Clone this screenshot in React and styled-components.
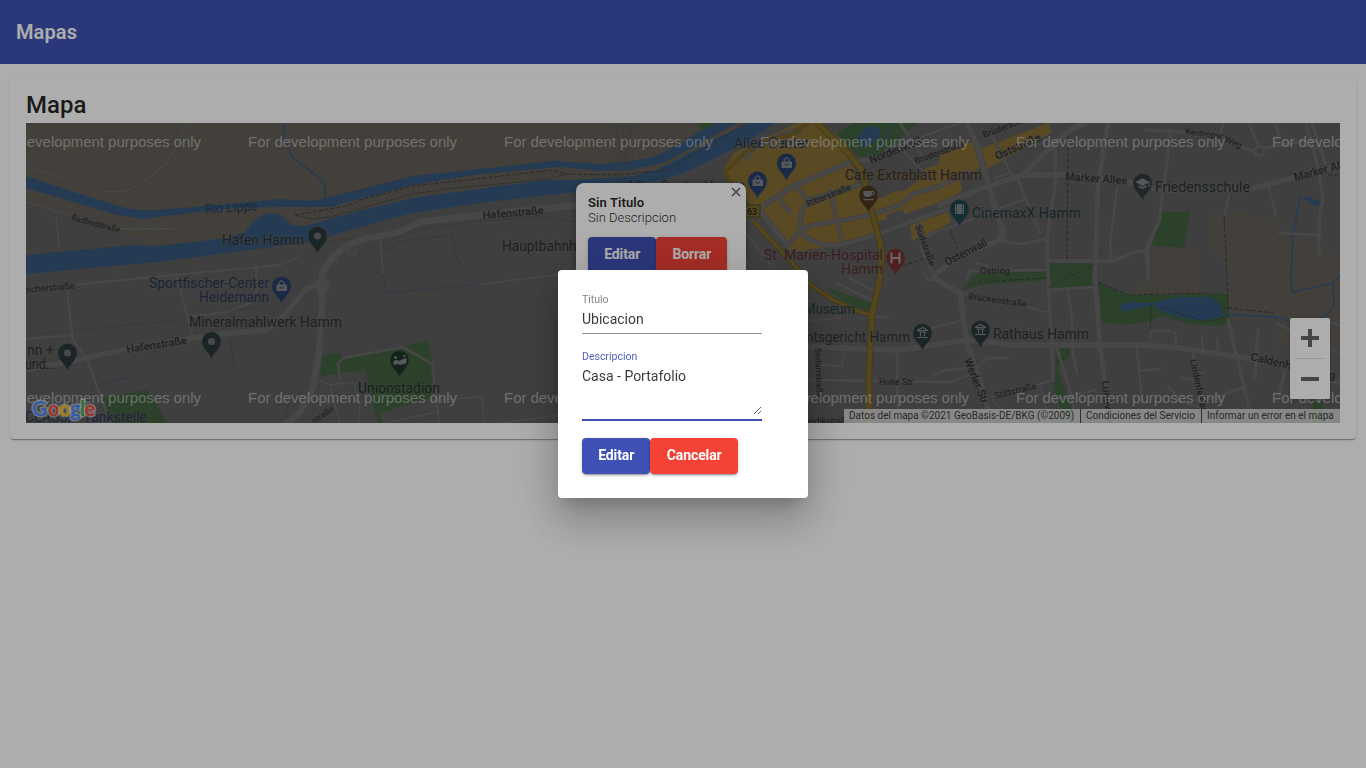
import React from "react";
import styled, { createGlobalStyle, css } from "styled-components";

const GlobalStyle = createGlobalStyle`
  *, *::before, *::after { box-sizing: border-box; }
  html, body { margin: 0; height: 100%; background: #fff; overflow: hidden; }
  body { font-family: Roboto, "Liberation Sans", sans-serif; color: rgba(0, 0, 0, 0.87); }
`;

const Toolbar = styled.header`
  display: flex;
  align-items: center;
  height: 64px;
  padding: 0 16px;
  background: #3f51b5;
  color: #fff;
`;

const ToolbarTitle = styled.h1`
  margin: 0;
  font-size: 20px;
  font-weight: 600;
  line-height: 32px;
  letter-spacing: 0.1px;
`;

const Card = styled.main`
  margin: 15px 10px 0;
  padding: 10px 16px 16px;
  border-radius: 4px;
  background: #fff;
  box-shadow: 0 2px 1px -1px rgba(0, 0, 0, 0.2), 0 1px 1px rgba(0, 0, 0, 0.14),
    0 1px 3px rgba(0, 0, 0, 0.12);
`;

const CardTitle = styled.h2`
  margin: 0;
  height: 34px;
  font-size: 24px;
  font-weight: 500;
  line-height: 32px;
`;

const MapFrame = styled.section`
  position: relative;
  height: 300px;
  overflow: hidden;
  background: #5e5e5e;
`;

const MapCanvas = styled.svg`
  display: block;
  width: 1314px;
  height: 300px;
  font-family: Roboto, sans-serif;
`;

const ZoomControl = styled.div`
  position: absolute;
  right: 10px;
  top: 195px;
  display: flex;
  flex-direction: column;
  align-items: center;
  width: 40px;
  height: 81px;
  border-radius: 2px;
  background: #fff;
  box-shadow: 0 1px 4px -1px rgba(0, 0, 0, 0.3);
`;

const ZoomButton = styled.span`
  display: flex;
  align-items: center;
  justify-content: center;
  height: 40px;
`;

const ZoomDivider = styled.span`
  width: 30px;
  height: 1px;
  background: #e0e0e0;
`;

const Attribution = styled.div`
  position: absolute;
  right: 0;
  bottom: 0;
  display: flex;
  height: 14px;
  background: rgba(245, 245, 245, 0.7);
  color: #3a3a3a;
  font-size: 10px;
  line-height: 14px;
  white-space: nowrap;
`;

const AttributionItem = styled.span`
  width: ${(p) => p.$width}px;
  padding-left: 5px;
  ${(p) => p.$divided && css`border-left: 1px solid #444;`}
`;

const InfoWindow = styled.div`
  position: absolute;
  left: 550px;
  top: 60px;
  width: 170px;
  height: 110px;
  padding: 12px;
  border-radius: 8px;
  background: #fff;
  box-shadow: 0 2px 7px 1px rgba(0, 0, 0, 0.3);
  font-size: 13px;
  font-weight: 300;
  line-height: 15px;
`;

const InfoTitle = styled.div`
  font-weight: 600;
  letter-spacing: 0.1px;
`;

const InfoText = styled.div`
  margin-bottom: 12px;
`;

const CloseIcon = styled.svg`
  position: absolute;
  right: 5px;
  top: 4px;
  width: 10px;
  height: 10px;
`;

const Actions = styled.div`
  display: flex;
`;

const Button = styled.button`
  height: 36px;
  padding: 0 16px;
  border: 0;
  border-radius: 4px;
  background: ${(p) => (p.$warn ? "#f44336" : "#3f51b5")};
  color: #fff;
  font: 700 14px/34px Roboto, sans-serif;
  padding-bottom: 2px;
  width: ${(p) => p.$width}px;
  white-space: nowrap;
  letter-spacing: -0.1px;
  box-shadow: 0 3px 1px -2px rgba(0, 0, 0, 0.2), 0 2px 2px rgba(0, 0, 0, 0.14),
    0 1px 5px rgba(0, 0, 0, 0.12);
`;

const Backdrop = styled.div`
  position: fixed;
  inset: 0;
  display: flex;
  align-items: center;
  justify-content: center;
  background: rgba(0, 0, 0, 0.32);
`;

const Dialog = styled.div`
  width: 250px;
  height: 228px;
  padding: 24px;
  border-radius: 4px;
  background: #fff;
  box-shadow: 0 11px 15px -7px rgba(0, 0, 0, 0.2), 0 24px 38px 3px rgba(0, 0, 0, 0.14),
    0 9px 46px 8px rgba(0, 0, 0, 0.12);
`;

const Field = styled.label`
  display: flex;
  flex-direction: column;
  width: 180px;
  height: ${(p) => p.$height}px;
  margin-bottom: ${(p) => p.$gap}px;
  border-bottom: ${(p) => (p.$focused ? "2px solid #3f51b5" : "1px solid #949494")};
`;

const FieldLabel = styled.span`
  flex: none;
  height: 17px;
  font-size: 10.5px;
  line-height: 12px;
  color: ${(p) => (p.$focused ? "#5362bd" : "rgba(0, 0, 0, 0.5)")};
`;

const inputStyle = css`
  display: block;
  width: 180px;
  margin: 0;
  padding: 0;
  border: 0;
  outline: 0;
  background: transparent;
  color: rgba(0, 0, 0, 0.78);
  font: 400 14px/16px Roboto, sans-serif;
`;

const Input = styled.input`
  ${inputStyle}
`;

const TextArea = styled.textarea`
  ${inputStyle}
  flex: none;
  height: 47px;
  resize: vertical;
  overflow: auto;
`;

const land = {
  beige: "#635f57",
  water: "#35587b",
  green: "#41613f",
  urban: "#846d35",
};

const AREAS = [
  ["beige", "26,123 760,123 700,160 655,178 560,190 420,208 310,238 280,243 26,262"],
  ["base", "26,203 120,232 150,240 110,246 26,254"],
  ["beige", "1209,215 1246,211 1253,221 1276,218 1280,236 1323,242 1323,252 1340,253 1340,345 1277,345 1277,316 1228,308 1226,260 1209,249"],
  ["beige", "1156,248 1198,250 1198,293 1157,295 1128,295 1150,278"],
  ["green", "323,355 340,353 343,358 428,341 432,362 432,397 380,413 383,423 378,423 365,370 320,376"],
  ["green", "100,398 147,390 167,423 108,423"],
  ["green", "697,123 717,123 703,131"],
  ["urban", "723,170 735,152 765,138 798,123 822,123 845,143 858,165 870,190 877,218 880,236 840,246 800,251 788,249 753,208"],
  ["urban", "873,200 885,197 892,192 905,190 918,181 925,169 939,164 941,154 974,141 980,168 960,178 962,190 953,198 907,213 877,222"],
  ["urban", "977,140 983,148 1048,123 1052,132 985,170 980,160"],
  ["urban", "910,225 947,206 951,221 940,230 933,235 912,240"],
  ["base", "887,214 903,209 907,225 892,239 884,232"],
  ["base", "852,165 870,163 874,172 858,184"],
  ["green", "836,133 853,123 918,123 889,147 883,154 858,157"],
  ["green", "827,288 872,303 868,312 837,298"],
  ["green", "1050,263 1095,261 1097,287 1048,290"],
  ["green", "976,274 1047,270 1047,280 980,285 960,291"],
  ["green", "1057,348 1070,348 1069,360 1060,363 1058,370 1077,423 1065,423 1053,385"],
  ["green", "1098,282 1128,295 1180,295 1210,293 1228,294 1229,320 1223,326 1193,325 1163,316 1147,322 1120,325 1102,322"],
  ["green", "1161,213 1190,211 1184,248 1151,245"],
  ["green", "1151,245 1160,229 1160,248"],
  ["green", "1313,402 1322,402 1324,423 1312,423"],
  ["water", "1120,305 1127,302 1155,303 1162,300 1180,297 1212,297 1222,307 1222,317 1203,321 1180,318 1163,312 1153,305 1123,312"],
  ["water", "1301,196 1307,197 1320,201 1320,207 1313,205"],
  ["water", "857,138 863,129 869,126 881,128 877,141 863,147"],
];

const RIVERS = [
  "M26 176 77 193 125 208Q142 211 157 210L217 205 280 199 312 201 330 197 413 176 480 169 553 161Q590 163 600 164L630 161 653 157 683 143 693 135 717 123H737L697 145 663 163 630 170 600 171 560 167 480 174 413 185 330 207H280L233 208 143 219 117 215 26 188Z",
  "M26 255 110 247 133 245 158 246 227 238 250 230 245 230 258 218Q268 211 280 215L287 220 292 225 305 226 363 210 413 198 463 191 547 180 577 180 633 176 657 170 690 153 717 138 750 123H775L750 140 710 161 683 173 663 180 617 186 577 192 550 195 480 203 413 213 357 228 313 241 280 246 158 262 26 274Z",
];

const STREAMS = [
  "M285 123 283 138 293 158 313 173Q325 182 325 188V200",
  "M1301 196 1297 214 1293 235 1291 278 1292 292 1333 283 1334 305Q1330 315 1318 319",
  "M1333 283 1340 275",
  "M1223 315 1240 315 1282 318 1290 323",
  "M893 123 885 140 877 150",
];

/* [path, width] */
const ROADS = [
  ["M26 165 107 192 127 191 142 183 167 163 182 137 187 123", 2],
  ["M26 202 70 215 120 229H172", 2],
  ["M120 229 145 226 258 214", 1],
  ["M56 213 59 248", 2],
  ["M26 290 73 285 153 277 207 272 280 265", 2.5],
  ["M67 290 73 340 87 360 107 413 110 423", 3],
  ["M26 339 73 335", 2.5],
  ["M26 370 87 358 130 348 193 338 233 333 267 330 283 317 307 288 322 284", 6],
  ["M580 205 480 215 420 222 397 233 367 238Q340 246 330 261L322 273V303L319 353 313 387Q302 415 287 423", 7],
  ["M177 277 193 337M188 317 227 312 250 303 257 290 256 268", 3],
  ["M280 265 292 261 298 256M330 254 338 263M347 247 348 254 356 255 357 241", 2],
  ["M380 238 383 273", 2.5],
  ["M480 284 558 275", 2],
  ["M340 380 338 363 343 358 403 347 432 364 438 413 439 423", 2.5],
  ["M319 380 330 385 353 382 360 403 359 423M330 385 340 423", 2],
  ["M387 423 437 412M433 400 482 397 484 423M500 423 558 415", 2],
  ["M746 158 752 148 775 138 800 130", 5],
  ["M733 225 760 208 793 186 853 161 871 160", 5],
  ["M757 207 788 246", 5],
  ["M795 185 808 200 801 213 800 230 788 246M808 200 865 183", 4],
  ["M800 230 807 238 823 245 840 245 873 236 910 222 960 205", 4.5],
  ["M800 230 813 225 840 221 870 215 900 205 913 194 940 186 970 171", 4],
  ["M830 190 842 241M780 196 783 204 790 213", 3.5],
  ["M745 232 771 265M740 245 750 267M728 250 740 270", 2.5],
  ["M903 151 918 167 932 180M900 123 922 156M885 150 918 138 960 123", 3],
  ["M940 205 983 188 1023 175 1050 148 1073 128 1087 123", 6],
  ["M967 123 977 145 1002 231Q1003 240 990 244L973 250Q945 263 933 278L960 293 967 343 979 379 992 423", 6],
  ["M1023 175H1067L1133 183 1160 190 1249 189 1293 178 1340 165", 6],
  ["M1055 150V185L1047 238 1048 278 1050 313 1053 380", 4],
  ["M1002 241 1020 244 1047 239M1002 241 1005 230 1000 221", 3.5],
  ["M1018 180 1040 233M992 211 1023 200M993 138 1012 175M995 178 1012 172", 3],
  ["M1108 123 1098 185 1095 278 1100 347 1108 403 1112 423", 5],
  ["M1117 188 1110 245 1112 258", 3],
  ["M1048 261H1113L1137 251H1145L1160 218", 4],
  ["M1145 251 1149 278", 3],
  ["M1171 131 1159 221 1148 246 1148 278", 4],
  ["M1146 130 1171 131 1223 138 1243 148 1254 151M1266 148 1303 141", 4],
  ["M1249 123 1258 145M1223 123 1220 137M1275 123 1279 135M1315 148 1340 143", 3],
  ["M1306 123 1318 168 1323 198 1319 218 1319 235 1318 245 1320 254M1312 123 1325 162", 4],
  ["M1279 233 1319 235M1269 188 1276 215M1229 195 1225 215", 3],
  ["M967 278 970 271 1047 270M977 263 987 266", 3],
  ["M917 218 922 251 932 272M923 239 935 232 965 222 992 211", 3],
  ["M808 347 900 350 967 340 990 342 1010 345 1140 345 1180 348 1240 357 1293 367 1340 383", 6],
  ["M897 352 898 423M808 380 950 382 970 375 987 358H1007M935 375 945 370 970 368", 3],
  ["M932 328 963 320M924 274 929 281 936 275M875 317H888M836 283 876 302M850 278 873 290", 3],
  ["M960 293 990 299 1027 307 1050 313", 3],
  ["M1068 290 1072 320 1072 348 1077 373M1048 290 1097 287", 3],
  ["M1053 348V380L993 397M1057 348 1070 390 1077 423M1040 385 1050 423M1053 400 1095 390", 3],
  ["M1137 348 1142 403M1140 371 1160 369M1150 342 1151 331H1171M1175 333 1177 345", 3],
  ["M1228 320 1248 403 1252 423M1245 387 1223 395 1210 398M1258 330 1255 377M1285 370 1279 397", 4],
  ["M1193 352 1197 381 1182 378M1197 375 1204 373M1202 337 1203 348M1217 339 1218 350M1175 334 1176 347", 3],
  ["M1168 386 1180 401 1198 407M1278 324 1290 330M1325 320 1340 326M1332 350 1340 353", 3],
  ["M1148 267 1148 278 1143 285M993 401 1015 420M810 321 840 318 842 307M817 346 820 365 842 366 846 347", 2],
];

const YELLOW_ROADS = [
  ["M817 123 833 138 850 155 862 171 873 215 882 251 880 278 872 315 869 368V423", 7],
  ["M753 221 797 268 808 283 833 300 860 312 872 315", 5],
  ["M731 184 725 172 740 157 763 141 793 134 808 123", 4],
];

const CREEKS =
  "M383 273 386 293 480 284 458 261 452 235 400 241 383 253M230 337 235 368M90 387 130 377M285 420 288 405 304 388";

const DASHES = [
  "M295 215 347 206 360 200 413 186 553 170 565 174 617 175 667 170 700 151 747 123",
  "M1068 135 1067 261M950 230 957 248M1224 216 1227 278 1228 310M1228 308 1275 313M903 266 934 255",
  "M978 282 1047 278M1098 282 1128 295 1210 293 1227 310M1068 352Q1065 358 1057 362",
  "M1163 308 1205 322 1228 317M1150 329 1152 306M1328 175H1340",
];

const PATHS =
  "M295 215 313 219 330 217 413 194 447 189 550 179 565 174M1050 263 1095 286M1048 288 1095 264";

const RAIL_SPURS =
  "M26 335 180 320 267 305M280 243 357 239 415 229 480 221 540 216 576 222M340 262 380 244 430 228";

const RAILS = "M612 123 619 183M617 123 623 183M622 123 630 183M628 123 637 183M634 123 617 183";

/* text, x, y, font size, drawn length, rotation, colour key */
const LABELS = [
  ["Hafen Hamm", 222, 245, 14, 82],
  ["Rio Lippe", 205, 214, 13.5, 53, -4, "river"],
  ["Radbodstraße", 71, 220, 8.5, 50, 15, "street"],
  ["Sportfischer-Center", 149, 288, 14, 120, 0, "shop"],
  ["Heidemann", 199, 302, 14, 70, 0, "shop"],
  ["Mineralmahlwerk Hamm", 189, 327, 14, 153],
  ["Hafenstraße", 127, 353, 10.5, 61, -9, "street"],
  ["Hafenstraße", 483, 219, 10.5, 61, -5, "street"],
  ["eicherstraße", 24, 293, 9, 51, -5, "street"],
  ["nn +", 27, 355, 14, 27],
  ["und…", 25, 369, 14, 29],
  ["CLASSIC Tankstelle", 25, 422, 14, 122, 0, "shop"],
  ["Unionstadion", 358, 393, 14, 82, 0, "park"],
  ["Hauptbahnhof", 502, 251, 14, 87],
  ["Allee-Center Hamm", 626, 191, 14, 119, 0, "shop"],
  ["Allee Center", 734, 148, 14, 75, 0, "shop"],
  ["Ritterstraße", 808, 207, 9, 47, -22, "street"],
  ["Nordenwall", 871, 164, 11, 55, -22, "street"],
  ["Brüderstraße", 916, 164, 9, 53, -20, "street"],
  ["Brüderstraße", 984, 138, 9, 53, -21, "street"],
  ["Oststraße", 997, 160, 11, 49, -24, "street"],
  ["Cafe Extrablatt Hamm", 845, 180, 14, 137, 0, "cafe"],
  ["St. Marien-Hospital", 764, 260, 14, 119, 0, "hospital"],
  ["Hamm", 841, 274, 14, 42, 0, "hospital"],
  ["CinemaxX Hamm", 972, 218, 14, 109, 0, "cinema"],
  ["Friedensschule", 1155, 192, 14, 95],
  ["Marker Allee", 1065, 180, 11, 62, 4, "street"],
  ["Marker Allee", 1295, 181, 11, 62, -15, "street"],
  ["Kentroper", 1185, 134, 8.5, 38, 8, "street"],
  ["Weg", 1224, 141, 8.5, 18, 25, "street"],
  ["Ostenwall", 947, 266, 11, 46, -27, "street"],
  ["Südstraße", 915, 226, 9, 43, 70, "street"],
  ["Ostring", 980, 274, 9, 30, 0, "street"],
  ["Brückenstraße", 968, 299, 9, 59, 8, "street"],
  ["Rathaus Hamm", 993, 339, 14, 96],
  ["Amtsgericht Hamm", 793, 342, 14, 117],
  ["Museum", 804, 314, 14, 51, 0, "cinema"],
  ["Hohe Str.", 879, 385, 9, 36, 0, "street"],
  ["Werler Str.", 964, 360, 11, 50, 68, "street"],
  ["Stiftstraße", 995, 399, 9, 43, -14, "street"],
  ["Lunéviller Str.", 1102, 381, 10.5, 66, 84, "street"],
  ["Lindenfelder", 1190, 360, 9.5, 53, 78, "street"],
  ["Sedanstraße", 815, 348, 8.5, 50, 88, "street"],
  ["Caldenhofer Weg", 1250, 360, 11, 87, 13, "street"],
  ["straße", 314, 424, 8.5, 25, -34, "street"],
  ["Feidikstraße", 803, 424, 9, 48, 0, "street"],
];

const LABEL_COLORS = {
  place: "#2b3032",
  street: "#2f3134",
  river: "#2c4157",
  shop: "#28344f",
  park: "#1c3028",
  cafe: "#423018",
  hospital: "#552c2e",
  cinema: "#1f373b",
};

const PINS = [
  [317.5, 236, "#28363a", "dot"],
  [67.5, 353, "#28363a", "dot"],
  [211.5, 341.5, "#28363a", "dot"],
  [281.5, 286, "#253e6b", "bag"],
  [757.5, 181, "#253e6b", "bag"],
  [786.5, 163, "#253e6b", "bag"],
  [399.5, 360, "#1d3428", "stadium"],
  [868.5, 195, "#4c371b", "cup"],
  [895.5, 258, "#72302f", "hospital"],
  [959.5, 209, "#1b454b", "film"],
  [1142.5, 183, "#303b3f", "school"],
  [922.5, 333, "#28363a", "museum"],
  [980.5, 330, "#28363a", "museum"],
];

const GLYPH = "#7f8488";

function PinGlyph({ kind }) {
  switch (kind) {
    case "bag":
      return (
        <g>
          <path d="M-5-1.5H5.5V5H-5Z" fill={GLYPH} />
          <path d="M-2.2-1V-3.5Q0-6.8 2.4-3.5V-1" fill="none" stroke={GLYPH} strokeWidth="1.2" />
          <path d="M-2 1Q0 3.8 2.4 1" fill="none" stroke="#253e6b" />
        </g>
      );
    case "cup":
      return (
        <g>
          <path d="M-5-4H3.5V-1Q3.5 2-.8 2-5 2-5-1ZM-5 4H5V5.2H-5Z" fill={GLYPH} />
          <path d="M3.5-3.4H5.6V-.6H3.2" fill="none" stroke={GLYPH} />
        </g>
      );
    case "hospital":
      return <path d="M-4-5.5V5.5M4-5.5V5.5M-4 0H4" fill="none" stroke="#a49594" strokeWidth="2" />;
    case "film":
      return (
        <g>
          <path d="M-4.5-5H4.5V5H-4.5Z" fill={GLYPH} />
          <path d="M-3-5V5M3-5V5" stroke="#1b454b" strokeDasharray="1.4 1" />
        </g>
      );
    case "school":
      return <path d="M-7-1 0-4.8 7-1 0 3ZM-4 2 0 4.3 4 2V4L0 6-4 4ZM6-1H7V4H6Z" fill={GLYPH} />;
    case "museum":
      return (
        <path
          d="M-5.5-2.5 0-5.5 5.5-2.5ZM-4-1H4M-2-1V3.5M2-1V3.5M-5.5 4.5H5.5"
          fill="none"
          stroke={GLYPH}
          strokeWidth="1.2"
        />
      );
    case "stadium":
      return (
        <g fill={GLYPH}>
          <circle cx="5" cy="-4" r="1.2" />
          <circle cx="-4" cy="-2.5" r="1.4" />
          <path d="M-6 1Q-3-1 0 1L3-1 7-2V3Q2 6-2 4L-6 5Z" />
        </g>
      );
    default:
      return <circle r="3.6" fill="#6a6d6e" />;
  }
}

function Pin({ x, y, color, kind }) {
  return (
    <g transform={`translate(${x} ${y})`}>
      <path
        d="M0 17.5C-1.2 12-9.5 7.5-9.5 0A9.5 9.5 0 0 1 9.5 0C9.5 7.5 1.2 12 0 17.5Z"
        fill={color}
        stroke="#555"
        strokeWidth="0.5"
      />
      <PinGlyph kind={kind} />
    </g>
  );
}

function Label({ data }) {
  const [text, x, y, size, length, angle = 0, kind = "place"] = data;
  return (
    <text
      transform={`translate(${x} ${y}) rotate(${angle})`}
      fontSize={size}
      textLength={length}
      lengthAdjust="spacingAndGlyphs"
      fill={LABEL_COLORS[kind]}
      stroke={kind === "river" ? "none" : "#666"}
      strokeOpacity="0.5"
      strokeWidth="1.6"
      strokeLinejoin="round"
      paintOrder="stroke"
      fontWeight={kind === "street" ? 500 : 400}
    >
      {text}
    </text>
  );
}

const WATERMARK_COLUMNS = [-8, 248, 504, 760, 1016, 1272];
const WATERMARK_ROWS = [147, 403];

const LOGO = [
  ["G", 32, 21, "#4d8df6"],
  ["o", 48, 20, "#ea4b3d"],
  ["o", 59, 20, "#f7bd12"],
  ["g", 70, 20, "#4d8df6"],
  ["l", 80, 20, "#3da755"],
  ["e", 84.5, 20, "#ea4b3d"],
];

function StreetMap() {
  return (
    <MapCanvas viewBox="26 123 1314 300" xmlns="http://www.w3.org/2000/svg">
      <rect x="26" y="123" width="1314" height="300" fill="#5e5e5e" />
      {AREAS.map(([kind, points], i) => (
        <polygon key={i} points={points} fill={land[kind] || "#5e5e5e"} />
      ))}
      {RIVERS.map((d) => (
        <path key={d} d={d} fill={land.water} />
      ))}
      <g fill="none" strokeLinejoin="round">
        {STREAMS.map((d) => (
          <path key={d} d={d} stroke={land.water} strokeWidth="1.5" />
        ))}
        <path d={CREEKS} stroke="#525962" strokeWidth="2" />
        <path d={RAILS} stroke="#53575b" strokeWidth="0.8" />
        <path d={RAIL_SPURS} stroke="#535353" strokeWidth="0.8" />
        {ROADS.map(([d, w]) => (
          <path key={d} d={d} stroke="#595959" strokeWidth={w + 0.6} />
        ))}
        {ROADS.map(([d, w]) => (
          <path key={d} d={d} stroke="#696969" strokeWidth={w - 0.2} strokeLinecap="round" />
        ))}
        <circle cx="1259.5" cy="151" r="5" stroke="#696969" strokeWidth="3" />
        <circle cx="321.5" cy="285.5" r="5" stroke="#696969" strokeWidth="5" />
        {YELLOW_ROADS.map(([d, w]) => (
          <path key={d} d={d} stroke="#635427" strokeWidth={w - 0.3} />
        ))}
        {YELLOW_ROADS.map(([d, w]) => (
          <path key={d} d={d} stroke="#7d6929" strokeWidth={w - 2} />
        ))}
        <path d={PATHS} stroke="#444846" strokeWidth="0.8" />
        {DASHES.map((d) => (
          <path key={d} d={d} stroke="#3a3e3c" strokeWidth="1" strokeDasharray="4 2" />
        ))}
      </g>
      <rect x="744" y="205" width="16" height="12" fill="#7a672a" stroke="#51461e" />
      <text x="747" y="214.5" fontSize="9" fontWeight="500" fill="#222">63</text>
      {LABELS.map((data, i) => (
        <Label key={i} data={data} />
      ))}
      {PINS.map(([x, y, color, kind]) => (
        <Pin key={`${x}-${y}`} x={x} y={y} color={color} kind={kind} />
      ))}
      <g fill="#fff" fillOpacity="0.45" fontFamily="'Liberation Sans', Arial, sans-serif" fontSize="15">
        {WATERMARK_ROWS.map((y) =>
          WATERMARK_COLUMNS.map((x) => (
            <text key={`${x}-${y}`} x={x} y={y} textLength="209">
              For development purposes only
            </text>
          ))
        )}
      </g>
      <g
        fontFamily="Lato, sans-serif"
        fontWeight="700"
        stroke="#fff"
        strokeOpacity="0.5"
        strokeWidth="3"
        strokeLinejoin="round"
        paintOrder="stroke"
      >
        {LOGO.map(([char, x, size, color]) => (
          <text key={x} x={x} y="416" fontSize={size} fill={color}>{char}</text>
        ))}
      </g>
    </MapCanvas>
  );
}

export default function App() {
  return (
    <>
      <GlobalStyle />
      <Toolbar>
        <ToolbarTitle>Mapas</ToolbarTitle>
      </Toolbar>
      <Card>
        <CardTitle>Mapa</CardTitle>
        <MapFrame>
          <StreetMap />
          <InfoWindow>
            <CloseIcon viewBox="0 0 10 10">
              <path d="M1 1 9 9M9 1 1 9" stroke="#555" strokeWidth="1.3" />
            </CloseIcon>
            <InfoTitle>Sin Titulo</InfoTitle>
            <InfoText>Sin Descripcion</InfoText>
            <Actions>
              <Button $width={68.4}>Editar</Button>
              <Button $width={70.6} $warn>Borrar</Button>
            </Actions>
          </InfoWindow>
          <ZoomControl>
            <ZoomButton>
              <svg width="18" height="18">
                <path d="M9 0V18M0 9H18" stroke="#666" strokeWidth="4" />
              </svg>
            </ZoomButton>
            <ZoomDivider />
            <ZoomButton>
              <svg width="18" height="18">
                <path d="M0 9H18" stroke="#666" strokeWidth="4" />
              </svg>
            </ZoomButton>
          </ZoomControl>
          <Attribution>
            <AttributionItem $width={236}>Datos del mapa ©2021 GeoBasis-DE/BKG (©2009)</AttributionItem>
            <AttributionItem $width={121} $divided>Condiciones del Servicio</AttributionItem>
            <AttributionItem $width={139} $divided>Informar un error en el mapa</AttributionItem>
          </Attribution>
        </MapFrame>
      </Card>
      <Backdrop>
        <Dialog>
          <Field $height={40} $gap={17}>
            <FieldLabel>Titulo</FieldLabel>
            <Input defaultValue="Ubicacion" />
          </Field>
          <Field $height={70} $gap={17} $focused>
            <FieldLabel $focused>Descripcion</FieldLabel>
            <TextArea defaultValue="Casa - Portafolio" />
          </Field>
          <Actions>
            <Button $width={68.4}>Editar</Button>
            <Button $width={87.6} $warn>Cancelar</Button>
          </Actions>
        </Dialog>
      </Backdrop>
    </>
  );
}
